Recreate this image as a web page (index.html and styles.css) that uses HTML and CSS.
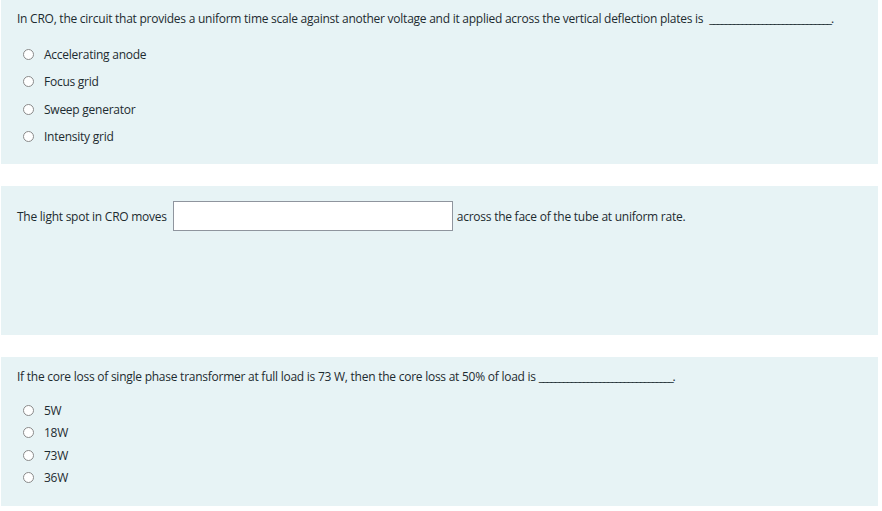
FILE: index.html
```html
<!DOCTYPE html>
<html>
<head>
<meta charset="utf-8">
<link rel="stylesheet" href="styles.css">
</head>
<body>
<div class="page">
  <div class="que q1">
    <div class="qtext">In CRO, the circuit that provides a uniform time scale against another voltage and it applied across the vertical deflection plates is <span class="blank gap">______________________________</span>.</div>
    <div class="answers tall">
      <label class="opt"><span class="radio"></span><span>Accelerating anode</span></label>
      <label class="opt"><span class="radio"></span><span>Focus grid</span></label>
      <label class="opt"><span class="radio"></span><span>Sweep generator</span></label>
      <label class="opt"><span class="radio"></span><span>Intensity grid</span></label>
    </div>
  </div>
  <div class="que q2">
    <div class="inline-row">
      <span>The light spot in CRO moves</span>
      <span class="field"></span>
      <span>across the face of the tube at uniform rate.</span>
    </div>
  </div>
  <div class="que q3">
    <div class="qtext">If the core loss of single phase transformer at full load is 73 W, then the core loss at 50% of load is <span class="blank">_________________________________</span>.</div>
    <div class="answers short">
      <label class="opt"><span class="radio"></span><span>5W</span></label>
      <label class="opt"><span class="radio"></span><span>18W</span></label>
      <label class="opt"><span class="radio"></span><span>73W</span></label>
      <label class="opt"><span class="radio"></span><span>36W</span></label>
    </div>
  </div>
</div>
</body>
</html>
```

FILE: styles.css
```css
html, body {
  margin: 0;
  padding: 0;
  background: #ffffff;
}
body {
  font-family: "Open Sans", "Noto Sans", sans-serif;
  font-size: 12px;
  color: #1d2b30;
}
.page {
  display: flex;
  flex-direction: column;
  gap: 22px;
  padding-left: 1px;
  width: 877px;
}
.que {
  background: #e7f3f5;
  box-sizing: border-box;
  padding: 10px 16px 0 16px;
}
.q1 { height: 164px; }
.q2 { height: 149px; padding-top: 15px; }
.q3 { height: 149px; padding-top: 11px; }
.qtext {
  line-height: 18px;
  letter-spacing: -0.25px;
  white-space: nowrap;
}
.blank { letter-spacing: -1.2px; }
.blank.gap { margin-left: 3px; }
.answers {
  display: flex;
  flex-direction: column;
  padding-left: 6px;
}
.answers.tall { margin-top: 17px; gap: 9.5px; }
.answers.short { margin-top: 15px; gap: 4.5px; }
.opt {
  display: flex;
  align-items: center;
  gap: 10px;
  height: 18px;
  letter-spacing: -0.25px;
}
.radio {
  width: 9px;
  height: 9px;
  border: 1px solid #8a8a8a;
  border-radius: 50%;
  background: #ffffff;
  flex: none;
}
.inline-row {
  display: flex;
  align-items: center;
  gap: 4px;
  letter-spacing: -0.25px;
}
.field {
  width: 278px;
  height: 28px;
  background: #ffffff;
  border: 1px solid #8f959e;
  display: block;
  flex: none;
  margin-left: 2px;
}
```
